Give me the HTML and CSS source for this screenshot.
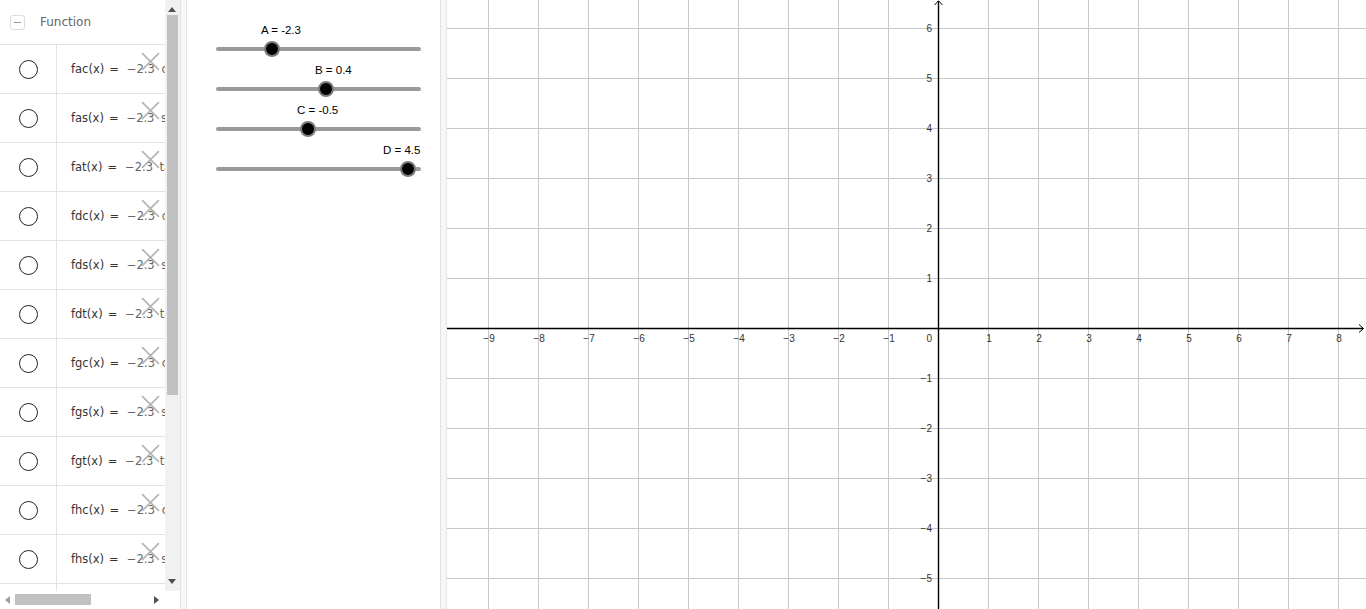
FILE: index.html
```html
<!DOCTYPE html>
<html lang="en">
<head>
  <meta charset="UTF-8">
  <title>Function sliders</title>
  <link rel="stylesheet" href="styles.css">
</head>
<body>
  <div class="app">

    <!-- algebra view -->
    <div class="algebra">
      <div class="lista">
        <div class="intestazione">
          <span class="comprimi"></span>
          <span>Function</span>
        </div>

        <div class="riga"><div class="radio"><span></span></div><div class="formula">fac(x) <i>=</i> <b>−2.3 cos(0.4 (x + 0.5)) + 4.5</b><svg class="canc" viewBox="0 0 18 18"><path d="M1 1L17 17M17 1L1 17"/></svg></div></div>
        <div class="riga"><div class="radio"><span></span></div><div class="formula">fas(x) <i>=</i> <b>−2.3 sin(0.4 (x + 0.5)) + 4.5</b><svg class="canc" viewBox="0 0 18 18"><path d="M1 1L17 17M17 1L1 17"/></svg></div></div>
        <div class="riga"><div class="radio"><span></span></div><div class="formula">fat(x) <i>=</i> <b>−2.3 tan(0.4 (x + 0.5)) + 4.5</b><svg class="canc" viewBox="0 0 18 18"><path d="M1 1L17 17M17 1L1 17"/></svg></div></div>
        <div class="riga"><div class="radio"><span></span></div><div class="formula">fdc(x) <i>=</i> <b>−2.3 cos(0.4 x − 0.5) + 4.5</b><svg class="canc" viewBox="0 0 18 18"><path d="M1 1L17 17M17 1L1 17"/></svg></div></div>
        <div class="riga"><div class="radio"><span></span></div><div class="formula">fds(x) <i>=</i> <b>−2.3 sin(0.4 x − 0.5) + 4.5</b><svg class="canc" viewBox="0 0 18 18"><path d="M1 1L17 17M17 1L1 17"/></svg></div></div>
        <div class="riga"><div class="radio"><span></span></div><div class="formula">fdt(x) <i>=</i> <b>−2.3 tan(0.4 x − 0.5) + 4.5</b><svg class="canc" viewBox="0 0 18 18"><path d="M1 1L17 17M17 1L1 17"/></svg></div></div>
        <div class="riga"><div class="radio"><span></span></div><div class="formula">fgc(x) <i>=</i> <b>−2.3 cos(0.4 (x − 0.5)) + 4.5</b><svg class="canc" viewBox="0 0 18 18"><path d="M1 1L17 17M17 1L1 17"/></svg></div></div>
        <div class="riga"><div class="radio"><span></span></div><div class="formula">fgs(x) <i>=</i> <b>−2.3 sin(0.4 (x − 0.5)) + 4.5</b><svg class="canc" viewBox="0 0 18 18"><path d="M1 1L17 17M17 1L1 17"/></svg></div></div>
        <div class="riga"><div class="radio"><span></span></div><div class="formula">fgt(x) <i>=</i> <b>−2.3 tan(0.4 (x − 0.5)) + 4.5</b><svg class="canc" viewBox="0 0 18 18"><path d="M1 1L17 17M17 1L1 17"/></svg></div></div>
        <div class="riga"><div class="radio"><span></span></div><div class="formula">fhc(x) <i>=</i> <b>−2.3 cos(0.4 x + 0.5) + 4.5</b><svg class="canc" viewBox="0 0 18 18"><path d="M1 1L17 17M17 1L1 17"/></svg></div></div>
        <div class="riga"><div class="radio"><span></span></div><div class="formula">fhs(x) <i>=</i> <b>−2.3 sin(0.4 x + 0.5) + 4.5</b><svg class="canc" viewBox="0 0 18 18"><path d="M1 1L17 17M17 1L1 17"/></svg></div></div>
        <div class="riga"><div class="radio"><span></span></div><div class="formula">fht(x) <i>=</i> <b>−2.3 tan(0.4 x + 0.5) + 4.5</b><svg class="canc" viewBox="0 0 18 18"><path d="M1 1L17 17M17 1L1 17"/></svg></div></div>
      </div>

      <div class="vscroll">
        <span class="freccia su"></span>
        <span class="pollice-v"></span>
        <span class="freccia giu"></span>
      </div>
      <div class="hscroll">
        <span class="freccia sx"></span>
        <span class="pollice-h"></span>
        <span class="freccia dx"></span>
      </div>
      <div class="angolo"></div>
    </div>

    <div class="divisore"></div>

    <!-- sliders -->
    <div class="cursori">
      <div class="cursore">
        <span class="etichetta" style="left: 45px">A = -2.3</span>
        <span class="binario"></span>
        <span class="manopola" style="left: 48px"></span>
      </div>
      <div class="cursore">
        <span class="etichetta" style="left: 99px">B = 0.4</span>
        <span class="binario"></span>
        <span class="manopola" style="left: 102px"></span>
      </div>
      <div class="cursore">
        <span class="etichetta" style="left: 81px">C = -0.5</span>
        <span class="binario"></span>
        <span class="manopola" style="left: 84px"></span>
      </div>
      <div class="cursore">
        <span class="etichetta" style="left: 167px">D = 4.5</span>
        <span class="binario"></span>
        <span class="manopola" style="left: 184px"></span>
      </div>
    </div>

    <div class="divisore"></div>

    <!-- graphics view -->
    <div class="grafico">
      <svg viewBox="447 0 919 609" width="919" height="609">
        <path class="griglia" d="M488.5 0V609M538.5 0V609M588.5 0V609M638.5 0V609M688.5 0V609M738.5 0V609M788.5 0V609M838.5 0V609M888.5 0V609M988.5 0V609M1038.5 0V609M1088.5 0V609M1138.5 0V609M1188.5 0V609M1238.5 0V609M1288.5 0V609M1338.5 0V609
          M447 28.5H1366M447 78.5H1366M447 128.5H1366M447 178.5H1366M447 228.5H1366M447 278.5H1366M447 378.5H1366M447 428.5H1366M447 478.5H1366M447 528.5H1366M447 578.5H1366"/>
        <path class="assi" d="M447 328.5H1363"/>
        <path class="assi" d="M938.5 609V1"/>
        <path class="frecce" d="M1359 324.5L1363.5 328.5L1359 332.5M934.5 5L938.5 0.8L942.5 5"/>
        <g class="num-x">
          <text x="489" y="342">−9</text>
          <text x="539" y="342">−8</text>
          <text x="589" y="342">−7</text>
          <text x="639" y="342">−6</text>
          <text x="689" y="342">−5</text>
          <text x="739" y="342">−4</text>
          <text x="789" y="342">−3</text>
          <text x="839" y="342">−2</text>
          <text x="889" y="342">−1</text>
          <text x="989" y="342">1</text>
          <text x="1039" y="342">2</text>
          <text x="1089" y="342">3</text>
          <text x="1139" y="342">4</text>
          <text x="1189" y="342">5</text>
          <text x="1239" y="342">6</text>
          <text x="1289" y="342">7</text>
          <text x="1339" y="342">8</text>
        </g>
        <g class="num-y">
          <text x="932" y="342">0</text>
          <text x="932" y="32">6</text>
          <text x="932" y="82">5</text>
          <text x="932" y="132">4</text>
          <text x="932" y="182">3</text>
          <text x="932" y="232">2</text>
          <text x="932" y="282">1</text>
          <text x="932" y="382">−1</text>
          <text x="932" y="432">−2</text>
          <text x="932" y="482">−3</text>
          <text x="932" y="532">−4</text>
          <text x="932" y="582">−5</text>
        </g>
      </svg>
    </div>

  </div>
</body>
</html>
```

FILE: styles.css
```css
html, body {
  margin: 0;
  padding: 0;
  background: #fff;
  overflow: hidden;
}
.app {
  display: flex;
  height: 609px;
  font-family: "Liberation Sans", Arial, sans-serif;
}

/* algebra */
.algebra {
  width: 180px;
  flex: none;
  display: grid;
  grid-template-columns: 165px 15px;
  grid-template-rows: 591px 18px;
}
.lista {
  overflow: hidden;
  grid-row: 1 / 3;
  grid-column: 1;
}
.intestazione {
  height: 44px;
  border-bottom: 1px solid #e2e2e2;
  display: flex;
  align-items: center;
  gap: 15px;
  padding-left: 10px;
  font-size: 12px;
  color: #666;
  font-family: "DejaVu Sans", sans-serif;
}
.comprimi {
  width: 13px;
  height: 13px;
  border: 1px solid #ddd;
  border-radius: 3px;
  position: relative;
}
.comprimi::after {
  content: "";
  position: absolute;
  left: 3px;
  right: 3px;
  top: 6px;
  height: 1px;
  background: #999;
}
.riga {
  display: flex;
  height: 48px;
  border-bottom: 1px solid #e2e2e2;
}
.radio {
  width: 56px;
  flex: none;
  border-right: 1px solid #e2e2e2;
  display: flex;
  align-items: center;
  justify-content: center;
}
.radio span {
  width: 17px;
  height: 17px;
  border: 1.5px solid #222;
  border-radius: 50%;
}
.formula {
  position: relative;
  flex: 1;
  padding-left: 14px;
  white-space: nowrap;
  display: flex;
  align-items: center;
  font-family: "DejaVu Sans", sans-serif;
  font-size: 11.5px;
  color: #333;
}
.formula i {
  font-style: normal;
  margin: 0 8px 0 5px;
}
.formula b {
  font-weight: normal;
  color: #666;
  word-spacing: 3px;
}
.canc {
  position: absolute;
  left: 84px;
  top: 7px;
  width: 19px;
  height: 19px;
}
.canc path {
  stroke: #b4b4b4;
  stroke-width: 1.6;
  fill: none;
}

.vscroll {
  grid-row: 1;
  grid-column: 2;
  background: #f1f1f1;
  position: relative;
}
.pollice-v {
  position: absolute;
  left: 2px;
  right: 2px;
  top: 15px;
  height: 380px;
  background: #c1c1c1;
}
.hscroll {
  grid-row: 2;
  grid-column: 1;
  background: #fff;
  position: relative;
  z-index: 1;
}
.pollice-h {
  position: absolute;
  left: 15px;
  width: 76px;
  top: 3px;
  height: 11px;
  background: #c1c1c1;
}
.angolo {
  grid-row: 2;
  grid-column: 2;
  background: #fff;
}
.freccia {
  position: absolute;
  width: 0;
  height: 0;
  border: 4px solid transparent;
}
.su { left: 3px; top: 3px; border-bottom: 5px solid #505050; }
.giu { left: 3px; bottom: 3px; border-top: 5px solid #505050; }
.sx { left: 1px; top: 5px; border-right: 5px solid #a0a0a0; }
.dx { left: 154px; top: 5px; border-left: 5px solid #505050; }

.divisore {
  width: 5px;
  flex: none;
  background: #f7f7f7;
  border-left: 1px solid #e4e4e4;
  border-right: 1px solid #e4e4e4;
}

/* sliders */
.cursori {
  width: 253px;
  flex: none;
  padding-top: 19px;
}
.cursore {
  position: relative;
  width: 205px;
  height: 40px;
  margin-left: 29px;
}
.etichetta {
  position: absolute;
  top: 5px;
  font-size: 11.5px;
  color: #000;
  white-space: nowrap;
}
.binario {
  position: absolute;
  left: 0;
  right: 0;
  top: 28px;
  height: 4px;
  border-radius: 2px;
  background: #9a9a9a;
}
.manopola {
  position: absolute;
  top: 22px;
  width: 12px;
  height: 12px;
  border: 2px solid #7c7c7c;
  border-radius: 50%;
  background: #000;
}

/* graphics */
.grafico {
  flex: 1;
  overflow: hidden;
}
.grafico svg {
  display: block;
}
.griglia {
  stroke: #c8c8c8;
  stroke-width: 1;
  fill: none;
}
.assi {
  stroke: #000;
  stroke-width: 1.4;
  fill: none;
}
.frecce {
  stroke: #000;
  stroke-width: 1;
  fill: none;
}
.num-x text,
.num-y text {
  font-family: "Liberation Sans", Arial, sans-serif;
  font-size: 10px;
  fill: #333;
}
.num-x text { text-anchor: middle; }
.num-y text { text-anchor: end; }
```
